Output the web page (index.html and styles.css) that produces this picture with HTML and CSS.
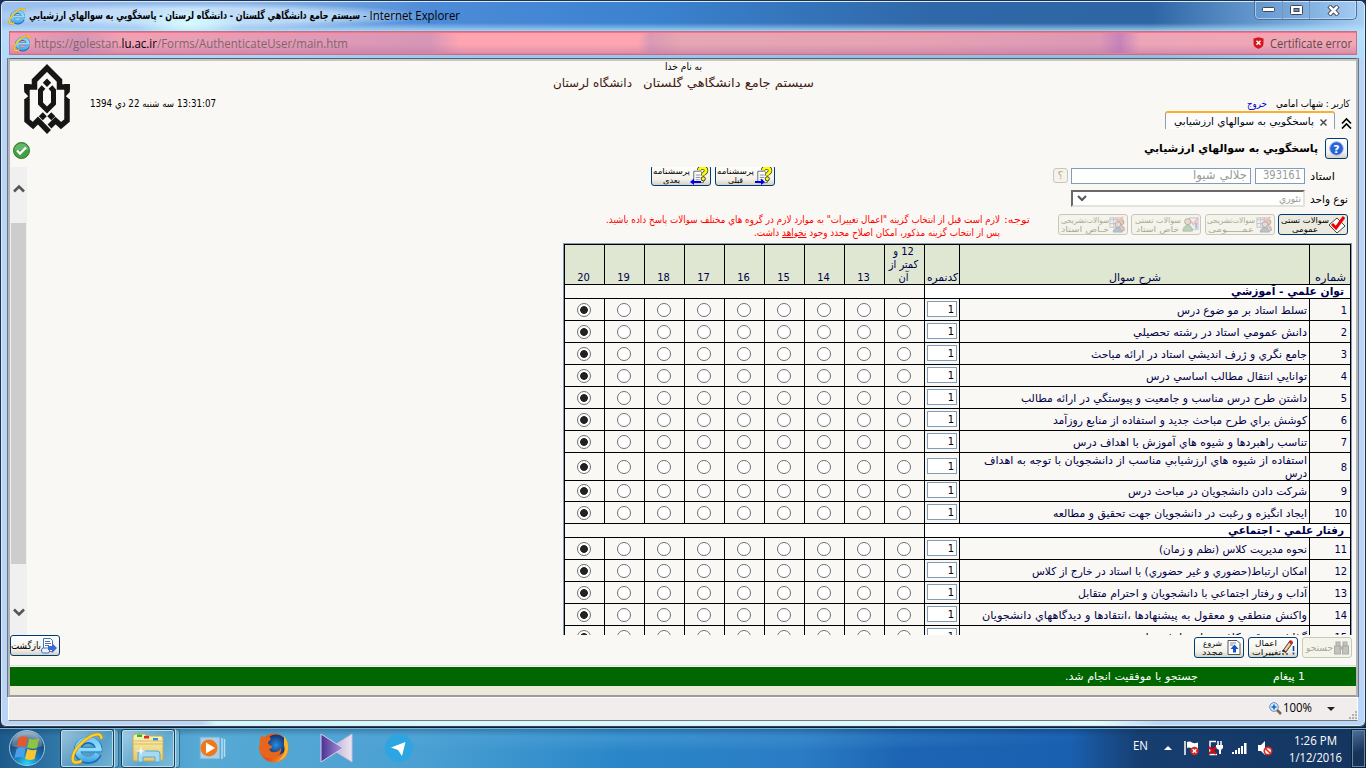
FILE: index.html
```html
<!DOCTYPE html>
<html lang="fa">
<head>
<meta charset="utf-8">
<title>سيستم جامع دانشگاهي گلستان</title>
<link rel="stylesheet" href="styles.css">
</head>
<body>
<svg width="0" height="0" class="defs">
  <defs>
    <linearGradient id="blue" gradientUnits="userSpaceOnUse" x1="0" y1="5" x2="0" y2="29"><stop offset="0" stop-color="#6cc4f4"/><stop offset=".5" stop-color="#8fe0ff"/><stop offset="1" stop-color="#3aa0e4"/></linearGradient>
    <linearGradient id="folder" x1="0" y1="0" x2="0" y2="1"><stop offset="0" stop-color="#fdf3b8"/><stop offset="1" stop-color="#e3c86a"/></linearGradient>
    <linearGradient id="fox" x1="0" y1="0" x2="1" y2="1"><stop offset="0" stop-color="#e8601c"/><stop offset=".6" stop-color="#e0501a"/><stop offset="1" stop-color="#f8b830"/></linearGradient>
    <linearGradient id="violet"><stop offset="0" stop-color="#4a3090"/><stop offset="1" stop-color="#a995dc"/></linearGradient>
    <linearGradient id="lilac"><stop offset="0" stop-color="#b8a8d0"/><stop offset="1" stop-color="#ece6f2"/></linearGradient>
    <radialGradient id="orb" cx=".5" cy=".95" r=".9"><stop offset="0" stop-color="#27d8fa"/><stop offset=".4" stop-color="#1875b8"/><stop offset=".75" stop-color="#1d4a78"/><stop offset="1" stop-color="#7f9db8"/></radialGradient>
    <radialGradient id="globe"><stop offset="0" stop-color="#2a8ce0"/><stop offset="1" stop-color="#12306c"/></radialGradient>
    <symbol id="ie" viewBox="0 0 32 32">
      <g fill="none" stroke="#1a6cb4" stroke-width="6.800"><path d="M26.500 21.500A10 9.500 0 1 1 27 16.500"/><path d="M9 17.500H30.300" stroke-width="5"/></g>
      <g fill="none" stroke="url(#blue)" stroke-width="5.200"><path d="M26 21.500A10 9.500 0 1 1 27 16.500"/><path d="M9 17.500l20.800.01" stroke-width="3.600"/></g>
      <path d="M29.500 7.500c.5-5.500-5-5-10-2.500C12 9 2.500 18.500 2.500 26c0 5 5 4 8.500 2" fill="none" stroke="#c98a10" stroke-width="3.200"/>
      <path d="M29.500 7.500c.5-5.500-5-5-10-2.500C12 9 2.500 18.500 2.500 26c0 5 5 4 8.500 2" fill="none" stroke="#fbd030" stroke-width="2.200"/>
    </symbol>
    <symbol id="quiz" viewBox="0 0 20 19">
      <path d="M4 5h7l3 3v9H4z" fill="#fff" stroke="#666"/><path d="M6 9h5M6 11.500h5M6 14h4" stroke="#888"/>
      <path d="M9.500 4C10 .5 17 .5 17 4.500c0 2.500-3.500 2.500-3.500 5" fill="none" stroke="#333" stroke-width="4.500"/>
      <path d="M9.500 4C10 .5 17 .5 17 4.500c0 2.500-3.500 2.500-3.500 5" fill="none" stroke="#ff0" stroke-width="3"/>
      <circle cx="14" cy="13" r="2.200" fill="#ff0" stroke="#333"/>
    </symbol>
    <symbol id="people" viewBox="0 0 18 18">
      <rect x="1" y="2" width="12" height="10" fill="#eef" stroke="#88a"/><path d="M1 4h12M5 2v10M9 2v10M1 8h12" stroke="#88a"/>
      <circle cx="13" cy="6.500" r="2.800" fill="#c98" stroke="#555"/>
      <path d="M7 3l3 3 5-5" stroke="#f77" fill="none" stroke-width="2"/>
      <circle cx="9.500" cy="9" r="3" fill="#dba" stroke="#555"/><path d="M4.500 17c0-6 10-6 10 0z" fill="#68b" stroke="#567"/><path d="M13 10c3 0 4 2 4 6h-2z" fill="#c66"/>
    </symbol>
    <symbol id="person" viewBox="0 0 18 18">
      <rect x="8" y="2" width="9" height="12" fill="#def" stroke="#88a"/><path d="M9 5l3 4 5-7" stroke="#f77" fill="none" stroke-width="2"/><path d="M15 7v6" stroke="#66c" stroke-width="2"/>
      <circle cx="6" cy="6" r="3.200" fill="#dba" stroke="#555"/><path d="M1 16c0-8 10-8 10 0z" fill="#7a7" stroke="#575"/>
    </symbol>
  </defs>
</svg>
<div class="window">
  <div class="titlebar">
    <svg class="title-icon" width="18" height="18"><use href="#ie"/></svg>
    <div class="caption" dir="ltr"><b class="fa" dir="rtl" data-w="331">سيستم جامع دانشگاهي گلستان - دانشگاه لرستان - پاسخگويي به سوالهاي ارزشيابي</b><span class="en" data-w="97">- Internet Explorer</span></div>
    <div class="winbtns"><span><svg width="13" height="6"><rect x=".5" y=".5" width="12" height="4" rx="1" fill="#fff" stroke="#445"/></svg></span><span><svg width="13" height="11"><rect x=".5" y=".5" width="12" height="9" rx="1" fill="#fff" stroke="#445"/><rect x="4" y="3.500" width="5" height="3" fill="#6b92c4" stroke="#445"/></svg></span><span><svg width="13" height="11"><path d="M2 1l9 9M11 1l-9 9" stroke="#445" stroke-width="4.500"/><path d="M2.500 1.500l8 8M10.500 1.500l-8 8" stroke="#fff" stroke-width="2.500"/></svg></span></div>
  </div>
  <div class="address">
    <svg width="18" height="18"><use href="#ie"/></svg>
    <span class="en url" data-w="314">https://golestan.<i>lu.ac.ir</i>/Forms/AuthenticateUser/main.htm</span>
    <svg class="shield" width="11" height="12"><path d="M.5 1.500L5.500.3l5 1.200v5c0 3-2.500 4.500-5 5.200-2.500-.7-5-2.200-5-5.200z" fill="#d8141c"/><path d="M3.500 3.700l4 4M7.500 3.700l-4 4" stroke="#fff" stroke-width="1.500"/></svg>
    <span class="en cert" data-w="82">Certificate error</span>
  </div>
  <div class="viewport">
    <header class="head">
      <div class="brand">
        <svg width="48" height="72" viewBox="0 0 48 72" fill="none" stroke="#161616" stroke-width="5.500">
          <path d="M4 26V23H11.500V16.500L24 4 36.500 16.500V23H44V26"/>
          <path d="M1.200 20h5.500v15.500H1.200l4-3.200-4-4.300zM46.800 20h-5.500v15.500h5.500l-4-3.200 4-4.300z" fill="#161616" stroke="none"/>
          <path d="M4 35V56.500L10 61.500 15 56.500 26 68M44 35V56.500L38 61.500 32.500 56.500 26.500 62.500"/>
          <path d="M20.500 23L17.500 26.500V39.500L24 46 30.500 39.500V26.500L27.500 23" stroke-width="5"/>
          <path d="M24 14.500l4.200 4.200-4.200 4.200-4.200-4.200zM19.800 48.300l4 4-4 4-4-4zM28.300 48.300l4 4-4 4-4-4z" fill="#161616" stroke="none"/>
        </svg>
        <svg width="17" height="17"><circle cx="8.500" cy="8.500" r="8" fill="#43a047" stroke="#2c7a2c"/><path d="M1.500 8a7 6.500 0 0 1 14 0z" fill="#7bc67b" opacity=".6"/><path d="M4 8.500l3 3 6-6" fill="none" stroke="#fff" stroke-width="2.300"/></svg>
      </div>
      <div class="date" dir="rtl"><span class="fa" data-w="126">13:31:07 سه شنبه 22 دي 1394</span></div>
      <div class="center" dir="rtl">
        <div class="bism"><span class="fa" data-w="37">به نام خدا</span></div>
        <div class="system"><span class="fa" data-w="171">سيستم جامع دانشگاهي گلستان</span><span class="fa" data-w="79">دانشگاه لرستان</span></div>
      </div>
      <div class="userside" dir="rtl">
        <div class="user"><span class="fa" data-w="74">کاربر : شهاب امامي</span><a class="fa" data-w="20">خروج</a></div>
        <div class="tabs"><svg width="11" height="12"><path d="M1 6.500l4.500-4.500L10 6.500M1 11.500L5.500 7 10 11.500" fill="none" stroke="#000" stroke-width="1.700"/></svg>
          <div class="tab"><svg width="7" height="7"><path d="M.5.500l6 6M6.500.500l-6 6" stroke="#444" stroke-width="1.400"/></svg><span class="fa" data-w="140">پاسخگويي به سوالهاي ارزشيابي</span></div></div>
        <div class="formtitle"><span class="btn help"><svg width="15" height="15"><circle cx="7.500" cy="7.500" r="6.800" fill="#2a63d8" stroke="#9db9ea"/><text x="7.500" y="11.500" text-anchor="middle" class="qm">?</text></svg></span><b class="fa" data-w="174">پاسخگويي به سوالهاي ارزشيابي</b></div>
      </div>
    </header>
    <div class="scrollarea">
      <div class="scrollbar"><svg width="12" height="9"><path d="M1 7.500L6 2.500l5 5" fill="none" stroke="#555" stroke-width="2.600"/></svg><i></i><svg width="12" height="9"><path d="M1 1.500l5 5 5-5" fill="none" stroke="#555" stroke-width="2.600"/></svg></div>
      <div class="form" dir="rtl">
        <div class="line a">
          <label class="fa in"><span data-w="25">استاد</span></label>
          <span class="field code"><span class="fa" data-w="38">393161</span></span>
          <span class="field name"><span class="fa" data-w="54">جلالي شيوا</span></span>
          <span class="btn off q">؟</span>
          <span class="btn nav first"><svg width="19" height="19"><use href="#quiz"/><path d="M1 16h7" stroke="#00e" stroke-width="2" /><path d="M7 12.500l4 3.500-4 3z" fill="#00e"/></svg><span class="fa bl"><span data-w="37">پرسشنامه</span><span data-w="15">قبلی</span></span></span>
          <span class="btn nav"><svg width="19" height="19"><use href="#quiz"/><path d="M3 16h8" stroke="#00e" stroke-width="2"/><path d="M4 12.500L0 16l4 3z" fill="#00e"/></svg><span class="fa bl"><span data-w="37">پرسشنامه</span><span data-w="17">بعدی</span></span></span>
        </div>
        <div class="line b">
          <label class="fa"><span data-w="38">نوع واحد</span></label>
          <span class="select"><span class="fa" data-w="22">تئوري</span><svg width="10" height="7"><path d="M1 1l4 4 4-4" fill="none" stroke="#555" stroke-width="2"/></svg></span>
        </div>
        <div class="line c">
          <span class="btn big on"><svg width="17" height="18"><path d="M8 2l8 8-8 7-8-8z" fill="#fff" stroke="#444"/><path d="M3 8l4 4 8-11" fill="none" stroke="#f00000" stroke-width="3"/></svg><span class="fa bl"><span data-w="48">سوالات تستی</span><span data-w="26">عمومی</span></span></span>
          <span class="btn big off"><svg width="17" height="17"><use href="#people"/></svg><span class="fa bl"><span data-w="48">سوالات‌تشریحی</span><span data-w="46">عمـــــومی</span></span></span>
          <span class="btn big off"><svg width="17" height="17"><use href="#person"/></svg><span class="fa bl"><span data-w="46">سوالات تستی</span><span data-w="43">خاص استاد</span></span></span>
          <span class="btn big off"><svg width="17" height="17"><use href="#people"/></svg><span class="fa bl"><span data-w="48">سوالات‌تشریحی</span><span data-w="48">خـاص استاد</span></span></span>
          <div class="notice"><span class="fa" data-w="26">توجه:</span><div><div><span class="fa" data-w="394">لازم است قبل از انتخاب گزينه "اعمال تغييرات" به موارد لازم در گروه هاي مختلف سوالات پاسخ داده باشيد.</span></div><div><span class="fa" data-w="246">پس از انتخاب گزينه مذکور، امکان اصلاح مجدد وجود <u>نخواهد</u> داشت.</span></div></div></div>
        </div>
        <div class="table fa" id="grid">
          <div class="row header">
            <div><span data-w="31">شماره</span></div><div><span data-w="52">شرح سوال</span></div><div><span data-w="31">کدنمره</span></div>
            <div class="multi"><span>12 و<br>کمتر از<br>آن</span></div><div>13</div><div>14</div><div>15</div><div>16</div><div>17</div><div>18</div><div>19</div><div>20</div>
          </div>
        </div>
      </div>
    </div>
    <div class="toolbar" dir="rtl">
      <span class="btn tool off"><svg width="15" height="14" fill="#888" stroke="#555"><rect x="2" y="1" width="4" height="4"/><rect x="9" y="1" width="4" height="4"/><rect x=".5" y="5" width="6" height="8"/><rect x="8.500" y="5" width="6" height="8"/><path d="M6 6h3v2H6z"/></svg><span class="fa bl one"><span data-w="27">جستجو</span></span></span>
      <span class="btn tool"><svg width="14" height="15"><path d="M10.500 1.500L3 12" stroke="#444" stroke-width="4"/><path d="M10.500 1.500L4 10.500" stroke="#fc9" stroke-width="2.200"/><path d="M11 1L9 3.500" stroke="#c22" stroke-width="3"/><path d="M1 11h2M1 14h2M5 14h2" stroke="#000"/><path d="M12.500 6v5M12.500 12.500v2" stroke="#14a" stroke-width="1.600"/></svg><span class="fa bl"><span data-w="22">اعمال</span><span data-w="29">تغییرات</span></span></span>
      <span class="btn tool"><svg width="14" height="15"><path d="M1 .5h9l3 3v11H1z" fill="#fff" stroke="#555"/><path d="M3 3h6M3 5h3" stroke="#888"/><path d="M7.500 4.500l4 4.500H9v3.500H6V9H3.500z" fill="#1554c8"/></svg><span class="fa bl"><span data-w="19">شروع</span><span data-w="21">مجدد</span></span></span>
      <span class="btn tool back"><svg width="16" height="16"><path d="M2.500.500h7l2 2v11h-9z" fill="#fff" stroke="#4a6fb5"/><path d="M4 3.500h5M4 5.500h6M4 7.500h4" stroke="#4a6fb5"/><rect x=".5" y="10" width="8" height="5" rx="2" fill="#eaf0ff" stroke="#4a6fb5"/><path d="M7 8h4V5l5 5-5 5v-3H7z" fill="#3a6ad4"/></svg><span class="fa bl one"><span data-w="30">بازگشت</span></span></span>
    </div>
    <div class="message" dir="rtl"><span class="fa" data-w="32">1 پيغام</span><span class="fa" data-w="133">جستجو با موفقيت انجام شد.</span></div>
    <div class="beige"></div>
  </div>
  <div class="status"><svg width="13" height="13"><path d="M8 8l4 4" stroke="#86603e" stroke-width="2.500"/><circle cx="5" cy="5" r="4.300" fill="#d8ecfc" stroke="#5b8cc0"/><path d="M5 2.500v5M2.500 5h5" stroke="#1464c8" stroke-width="1.600"/></svg><span class="en" data-w="29">100%</span><svg class="drop" width="8" height="4"><path d="M0 0h8L4 4z" fill="#222"/></svg><svg class="grip" width="9" height="9"><path d="M6 1h2M6 4h2M3 4h2M6 7h2M3 7h2M0 7h2" stroke="#b5b0b0" stroke-width="2"/></svg></div>
</div>
<div class="taskbar">
  <svg class="orb" width="38" height="38" viewBox="0 0 38 38"><circle cx="19" cy="19" r="17.500" fill="url(#orb)" stroke="#9cc6e2"/><path d="M4 17a15 14 0 0 1 30 0q-15 5-30 0z" fill="#fff" opacity=".25"/>
    <path d="M10.500 9q4.500-2.500 9-.5L18 18q-4.500-2-9 .5z" fill="#e8562a"/><path d="M21 9.500q4.500 2 10 0L29 19q-5 1.500-9.500-.5z" fill="#8cc63e"/><path d="M8.500 20q4-2.500 9.200-.5L15.500 29q-4-2-9 .3z" fill="#4a9fe8"/><path d="M19.300 20q4.500 2 9.500.5L26.500 30q-5 2-9.500-.3z" fill="#fbc52c"/></svg>
  <div class="task"><svg width="34" height="34"><use href="#ie"/></svg></div><i class="stack"></i>
  <div class="task"><svg width="34" height="32" viewBox="0 0 34 32"><path d="M2 5q0-3 3-3h9l2 3 2-1h12q2 0 2 3v20q0 2-2 2H4q-2 0-2-2z" fill="url(#folder)" stroke="#c9a94e"/><path d="M6 2.500h5v2.500H6z" fill="#18c428"/><path d="M13 4h5v2.500h-5z" fill="#e02c1c"/><path d="M22 6h5v2.500h-5z" fill="#2894e8"/><path d="M3 9h28M3 12h28" stroke="#d6bb60"/><path d="M7 30V21q0-2 2-2h17q3 0 3 3v8h-5v-5H12v5z" fill="#a5daf2" stroke="#5aa8d0"/><path d="M10 14l1 4 4 1-4 1-1 4-1-4-4-1 4-1z" fill="#fff" opacity=".85"/></svg></div><i class="stack"></i>
  <svg class="wmp" width="28" height="26"><rect x="1" y="2" width="20" height="22" fill="#a8d0ea" stroke="#6fa9cf"/><path d="M23 3v21M25.500 4v18" stroke="#b8dcf0" stroke-width="1.500"/><circle cx="10" cy="13" r="8.500" fill="#f07818"/><path d="M7 7.500l9 5.500-9 5.500z" fill="#fff"/></svg>
  <svg class="fox" width="32" height="32"><circle cx="16" cy="16" r="14.500" fill="url(#fox)"/><circle cx="18" cy="13" r="10.500" fill="url(#globe)"/><path d="M2 9l1-6 4 3q3-2 6 0-1 3-3 4 0 3 4 4 0 3-3 3 2 4 6 3 4 0 6-4 1 7-6 10-12 3-16-8z" fill="#e8651c"/><path d="M26 4q5 6 4 13-1 9-10 12 9-7 6-16z" fill="#fbb42c"/></svg>
  <svg class="vs" width="33" height="30"><path d="M32 1v28L10 15z" fill="url(#lilac)" stroke="#cbbcd8"/><path d="M1 1v28l22-14z" fill="url(#violet)" stroke="#d8cff0"/></svg>
  <svg class="tg" width="28" height="28"><circle cx="14" cy="14" r="14" fill="#2ca5e0"/><path d="M6 13.500L20.500 8 17 22l-4-6z" fill="#fff"/></svg>
  <div class="tray en">
    <span data-w="15">EN</span>
    <svg width="8" height="4"><path d="M0 4h8L4 0z" fill="#fff"/></svg>
    <svg class="flag" width="16" height="16"><path d="M1 1v14" stroke="#fff" stroke-width="1.500"/><path d="M3 2q3-1 5 0.500t6 0V9q-3 1-6-.5T3 8z" fill="#fff"/><circle cx="10.500" cy="11" r="4.200" fill="#d82820"/><path d="M8.700 9.200l3.600 3.600M12.300 9.200L8.700 12.800" stroke="#fff" stroke-width="1.400"/></svg>
    <svg class="plug" width="16" height="16"><path d="M8 1.500H2v13h7" fill="none" stroke="#fff" stroke-width="1.500"/><path d="M10 1v4M13 1v4" stroke="#fff" stroke-width="1.500"/><path d="M8 5h7v3l-2 2v4h-2v-4L8 8z" fill="#fff"/><path d="M1 7l7 7M8 7l-7 7" stroke="#e00808" stroke-width="2.200"/></svg>
    <svg class="bars" width="16" height="12" fill="#fff"><path d="M0 10h2v2H0zM3 8h2v4H3zM6 6h2v6H6zM9 4h2v8H9zM12 1h2.500v11H12z"/></svg>
    <svg class="vol" width="16" height="16"><path d="M1 5h3l4-4v14l-4-4H1z" fill="#fff"/><circle cx="11" cy="11" r="3.700" fill="#fff" stroke="#d82820" stroke-width="1.700"/><path d="M8.500 8.500l5 5" stroke="#d82820" stroke-width="1.500"/></svg>
    <div class="clock"><span data-w="43">1:26 PM</span><span data-w="53">1/12/2016</span></div>
    <i class="peek"></i>
  </div>
</div>
<script src="app.js"></script>
</body>
</html>
```
FILE: styles.css
```css
* { box-sizing: border-box; }
body { margin: 0; width: 1366px; height: 768px; overflow: hidden; display: flex; flex-direction: column; background: #1c2f52; font: 10px "DejaVu Sans Condensed", "DejaVu Sans", sans-serif; }
svg { display: block; flex: none; }
.defs { position: absolute; }
i { font-style: normal; }
.fa { font-family: "DejaVu Sans Condensed", "DejaVu Sans", sans-serif; font-stretch: condensed; font-size: 11px; }
.en { font-family: "Open Sans", "Noto Sans", sans-serif; font-size: 12px; }
[data-w] { display: inline-block; white-space: nowrap; flex: none; transform-origin: 0 50%; }
[dir="rtl"] [data-w], [dir="rtl"][data-w] { transform-origin: 100% 50%; }

.window { height: 727px; display: flex; flex-direction: column; padding: 0 8px 0 7px; border: 1px solid #203050; border-bottom-color: #345; border-radius: 6px; box-shadow: inset 0 0 0 1px #d5ecff;
  background: linear-gradient(#fff0 29px, #bfe3fd80 30px, #fff0 60px), linear-gradient(90deg, #b9d4f5 0, #b9d4f5 200px, #d0f8ff 215px, #e0fcff 1100px, #b8d6f8 1160px) 0 690px no-repeat, linear-gradient(#bcd5f5, #bcd5f5) 0 58px no-repeat,
  radial-gradient(ellipse 55px 18px at 188px 22px, #d8fcff, #fff0), radial-gradient(ellipse 230px 13px at 200px 15px, #d5ecffb0 60%, #fff0), linear-gradient(#fff0 22px, #b5e4ffb0 29px), linear-gradient(90deg, #9ec1ee 0, #8bb4e6 250px, #4d8bd8 430px, #3b82cf 650px, #2f68a8 930px, #2d65a5 1150px, #7cadde 1300px, #aad0f4 1366px); }
.titlebar { height: 30px; flex: none; display: flex; align-items: flex-start; }
.title-icon { margin-top: 6px; }
.caption { display: flex; gap: 3px; margin-left: 3px; padding-top: 6px; line-height: 17px; color: #000; }
.winbtns { margin-left: auto; display: flex; height: 19px; border: 1px solid #4f6f98; border-top: 0; border-radius: 0 0 5px 5px; box-shadow: inset 0 0 0 1px #d3e5f8a0; }
.winbtns span { width: 27px; display: flex; align-items: center; justify-content: center; border-right: 1px solid #7795bd; }
.winbtns span:first-child { width: 28px; }
.winbtns span:last-child { width: 46px; border: 0; }
.address { height: 24px; flex: none; margin-left: 1px; display: flex; align-items: center; border: 1px solid #c8707f; box-shadow: inset 0 1px #fb7186, inset 0 -1px #f07a92; padding: 0 4px 0 3px;
  background: linear-gradient(#fff0 55%, #b070a870), linear-gradient(90deg, #f3a0b4 0, #d494b4 70px, #f0a0b4 110px, #d796b6 420px, #ffa5b1 450px, #ffa5b1 628px, #d99ab4 640px, #e6a6b3 672px, #e6a2b2 900px, #dc98b4 1090px, #c583ba 1110px, #eca6b8 1130px, #f3a6b3 1350px); }
.address .url { margin-left: 3px; color: #80666c; line-height: 18px; padding-top: 1px; }
.address .url i { color: #000; }
.address .shield { margin-left: auto; margin-right: 6px; }
.address .cert { color: #5f474d; }

.viewport { margin: 3px 0 0; height: 639px; flex: none; border: 2px solid #b4b5b8; border-top: 1px solid #55606e; border-bottom: 2px solid #9c9c9e; box-shadow: -1px 0 #68788c, 1px 0 #68788c, inset 0 2px #c8c8c8; background: #faf8f4; display: flex; flex-direction: column; padding-top: 2px; width: 1350px; }
.head { height: 106px; flex: none; display: flex; }
.brand { width: 80px; flex: none; padding: 3px 0 0 13px; }
.brand svg + svg { margin: 6px 0 0 -10px; }
.date { width: 126px; flex: none; padding-top: 36px; line-height: 14px; }
.date .fa { font-size: 10px; }
.center { margin-left: 337px; width: 261px; line-height: 13px; }
.bism { padding-right: 112px; height: 15px; line-height: 12px; }
.bism .fa { font-size: 10px; }
.system { display: flex; gap: 11px; line-height: 15px; color: #402010; }
.system .fa { font-size: 12px; }
.userside { margin-left: auto; width: 260px; padding: 36px 4px 0 0; }
.user { display: flex; gap: 9px; height: 14px; line-height: 14px; padding-right: 2px; }
.user .fa { font-size: 10px; }
.user a { color: #00d; }
.tabs { display: flex; height: 19px; }
.tabs > svg { margin: 6px 0 0 6px; }
.tab { width: 170px; height: 18px; border: 1px solid #8fa0ad; border-top: 2px solid #fdae2a; border-bottom: 0; border-radius: 3px 3px 0 0; background: #fcfcfe; display: flex; align-items: center; gap: 6px; padding: 2px 7px 0 0; }
.tab .fa { font-size: 10px; line-height: 14px; }
.formtitle { display: flex; align-items: center; gap: 7px; height: 21px; margin: 8px 4px 0 0; }
.qm { font: bold 11px "DejaVu Sans", sans-serif; fill: #fff; }

.btn { display: flex; align-items: center; height: 21px; flex: none; border: 1px solid #003c74; border-radius: 3px; background: linear-gradient(#fff, #f3f1ea 70%, #d6d0c4); padding: 0 2px; color: #000; }
.btn.off { border-color: #c9c7ba; background: #f5f4ea; color: #a9a899; }
.btn.off svg { opacity: .45; }
.btn.help { width: 23px; padding: 0 3px; }
.bl { flex: 1; display: flex; flex-direction: column; align-items: center; font-size: 8px; line-height: 9px; white-space: nowrap; }
.bl.one { font-size: 10px; line-height: 12px; }
.scrollarea { height: 468px; flex: none; display: flex; overflow: hidden; }
.scrollbar { width: 17px; flex: none; background: #f0f0f0; display: flex; flex-direction: column; align-items: center; padding: 17px 0; }
.scrollbar i { width: 15px; height: 341px; background: #cdcdcd; margin: 30px 0 44px; }
.form { flex: 1; }
.line { display: flex; align-items: flex-start; padding-right: 8px; }
.line label { width: 43px; flex: none; line-height: 17px; color: #000; font-size: 11px; padding-top: 1px; }
.line label.in { padding-right: 13px; }
.a { height: 23px; }
.field { margin-top: 1px; height: 16px; border: 1px solid #7f9db9; background: #fff; color: #9a9a9a; line-height: 14px; padding-right: 3px; display: flex; }
.field .fa { font-size: 12px; line-height: 13px; }
.field.code { width: 50px; }
.field.name { width: 180px; margin-right: 4px; }
.q { width: 15px; height: 15px; margin: 1px 3px 0 0; justify-content: center; font: 11px "DejaVu Sans", sans-serif; }
.nav { width: 60px; margin-top: -2px; margin-right: 4px; padding: 0 1px; }
.nav.first { margin-right: 278px; }
.b { height: 24px; }
.select { width: 234px; height: 17px; border: 2px solid #e4e2dd; border-top-color: #696969; border-left-color: #696969; background: #fff; color: #9a9a9a; display: flex; align-items: center; justify-content: space-between; padding: 0 2px 0 4px; line-height: 13px; }
.select .fa { font-size: 10px; }
.c { height: 29px; }
.big { width: 70px; margin-left: 3.300px; padding: 0 1px; }
.big.on { background: #ece9df; }
.notice { display: flex; gap: 4px; margin: -1px 24.700px 0 0; color: #f00; line-height: 13px; }
.notice .fa { font-size: 10px; display: block; }

.table { margin-right: 4px; width: 789px; border: 1px solid #7f9db9; color: #000048; }
.row { display: grid; grid-template-columns: 41px 350px 35px repeat(9, 40px); height: 22px; width: 787px; border-right: 1px solid #000; }
.row > div { border-left: 1px solid #000; border-bottom: 1px solid #000; display: flex; align-items: center; justify-content: center; min-width: 0; line-height: 13px; }
.row > div:nth-child(n+4) { padding-right: 2px; }
.row.header { height: 41px; border-top: 1px solid #000; background: #dfe6d2; }
.row.header > div { align-items: flex-end; }
.row.header > .multi { text-align: center; }
.row.section { height: 14px; grid-template-columns: 426px 360px; background: #fff; }
.row.section > div { justify-content: flex-start; padding-right: 6px; font-weight: bold; }
.row.section > div + div { background: #faf8f4; }
.row.double { height: 27px; }
.row > .num { justify-content: flex-start; padding: 1px 3px 0 0; }
.row > .desc { flex-direction: column; align-items: flex-start; justify-content: center; padding: 1px 2px 0 0; }
.box { width: 30px; height: 16px; border: 1px solid #7f9db9; background: #fff; color: #000; line-height: 15px; padding-right: 2px; margin-bottom: 1px; }
.radio { width: 14px; height: 14px; border: 1px solid #707070; border-radius: 50%; background: #fff; }
.radio.sel { background: radial-gradient(circle, #222 3.500px, #fff 4.200px); }

.toolbar { height: 31px; flex: none; display: flex; gap: 4px; padding: 2px 4px 0 0; border-bottom: 1px solid #e0e0e0; }
.back { margin: -2px auto 0 0; }
.tool { width: 50px; }
.message { height: 19px; margin-top: 1px; flex: none; background: #060; color: #fff; display: flex; gap: 75px; padding-right: 51px; line-height: 19px; }
.beige { flex: 1; background: #ece9d8; }
.status { height: 24px; flex: none; width: 1350px; background: #f1edec; border: 1px solid #fff; border-bottom: 1px solid #777; display: flex; align-items: center; padding-left: 1260px; }
.status .en { margin-left: 1px; line-height: 18px; }
.status > svg:first-child, .status .en { position: relative; top: -1px; }
.status .drop { margin-left: 15px; }
.status .grip { margin: 12px 0 0 14px; }

.taskbar { height: 41px; flex: none; display: flex; align-items: center; border-top: 1px solid #10202e; box-shadow: inset 0 1px #7fb4d8;
  background: radial-gradient(ellipse 500px 14px at 600px 10px, #5aa8dc60, #fff0), linear-gradient(#0a305060, #fff0 8px), linear-gradient(90deg, #1d5a8c 0, #3a88b8 90px, #56aad4 200px, #4aa0d2 420px, #2a86c8 620px, #2a7cc4 800px, #1d65b4 900px, #1a60b0 1070px, #163e70 1140px, #14355f 1366px); }
.orb { margin-left: 8px; }
.task { width: 54px; height: 39px; margin-left: 14px; border: 1px solid #183c54; border-radius: 3px; box-shadow: inset 0 0 0 1px #b8dcf0; background: linear-gradient(135deg, #cdeaf8b0, #8cc4e050 60%, #a8d8ec80); display: flex; align-items: center; justify-content: center; }
.stack { width: 5px; height: 39px; border: 1px solid #3a6c8c; border-left-color: #b8dcf0; border-radius: 0 3px 3px 0; background: #9accdf70; }
.stack + .task { margin-left: 2px; }
.wmp { margin-left: 19px; }
.fox { margin-left: 31px; }
.vs { margin-left: 30px; }
.tg { margin-left: 32px; }
.tray { margin-left: auto; display: flex; align-items: center; color: #fff; height: 40px; }
.tray > [data-w] { margin: -5px 16px 0 0; }
.flag { margin-left: 12px; }
.plug { margin-left: 8px; }
.bars { margin-left: 8px; }
.vol { margin-left: 9px; }
.clock { width: 60px; margin-left: 12px; display: flex; flex-direction: column; align-items: center; line-height: 17px; padding-top: 2px; }
.peek { width: 15px; height: 39px; margin-left: 6px; border: 1px solid #0b2038; box-shadow: inset 0 0 0 1px #6684a4; background: linear-gradient(160deg, #50719a, #16335a 60%); }
```
FILE: app.js
```js
// Questionnaire content: strings are section titles, arrays are [number, [line, width] ...]
const items = [
  ["توان علمي - آموزشي", 113],
  [1, ["تسلط استاد بر مو ضوع درس", 130]],
  [2, ["دانش عمومي استاد در رشته تحصيلي", 174]],
  [3, ["جامع نگري و ژرف انديشي استاد در ارائه مباحث", 216]],
  [4, ["توانايي انتقال مطالب اساسي درس", 161]],
  [5, ["داشتن طرح درس مناسب و جامعيت و پيوستگي در ارائه مطالب", 286]],
  [6, ["کوشش براي طرح مباحث جديد و استفاده از منابع روزآمد", 254]],
  [7, ["تناسب راهبردها و شيوه هاي آموزش با اهداف درس", 234]],
  [8, ["استفاده از شيوه هاي ارزشيابي مناسب از دانشجويان با توجه به اهداف", 323], ["درس", 22]],
  [9, ["شرکت دادن دانشجويان در مباحث درس", 179]],
  [10, ["ايجاد انگيزه و رغبت در دانشجويان جهت تحقيق و مطالعه", 254]],
  ["رفتار علمي - اجتماعي", 116],
  [11, ["نحوه مديريت کلاس (نظم و زمان)", 148]],
  [12, ["امکان ارتباط(حضوري و غير حضوري) با استاد در خارج از کلاس", 275]],
  [13, ["آداب و رفتار اجتماعي با دانشجويان و احترام متقابل", 229]],
  [14, ["واکنش منطقي و معقول به پيشنهادها ،انتقادها و ديدگاههاي دانشجويان", 325]],
  [15, ["گذاشتن وقت کافي براي دانشجويان", 170]]
];

const grid = document.getElementById("grid");
for (const item of items) {
  const row = document.createElement("div");
  if (typeof item[0] === "string") {
    row.className = "row section";
    row.innerHTML = `<div><span data-w="${item[1]}">${item[0]}</span></div><div></div>`;
  } else {
    const [num, ...lines] = item;
    row.className = lines.length > 1 ? "row double" : "row";
    let cells = `<div class="num">${num}</div><div class="desc">`;
    cells += lines.map(([t, w]) => `<span data-w="${w}">${t}</span>`).join("");
    cells += '</div><div><span class="box">1</span></div>';
    for (let i = 0; i < 9; i++) cells += `<div><span class="radio${i === 8 ? " sel" : ""}"></span></div>`;
    row.innerHTML = cells;
  }
  grid.append(row);
}

for (const el of document.querySelectorAll("[data-w]")) {
  const range = document.createRange();
  range.selectNodeContents(el);
  const natural = range.getBoundingClientRect().width;
  const width = Number(el.dataset.w);
  el.style.width = width + "px";
  el.style.transform = `scaleX(${width / natural})`;
}
```
